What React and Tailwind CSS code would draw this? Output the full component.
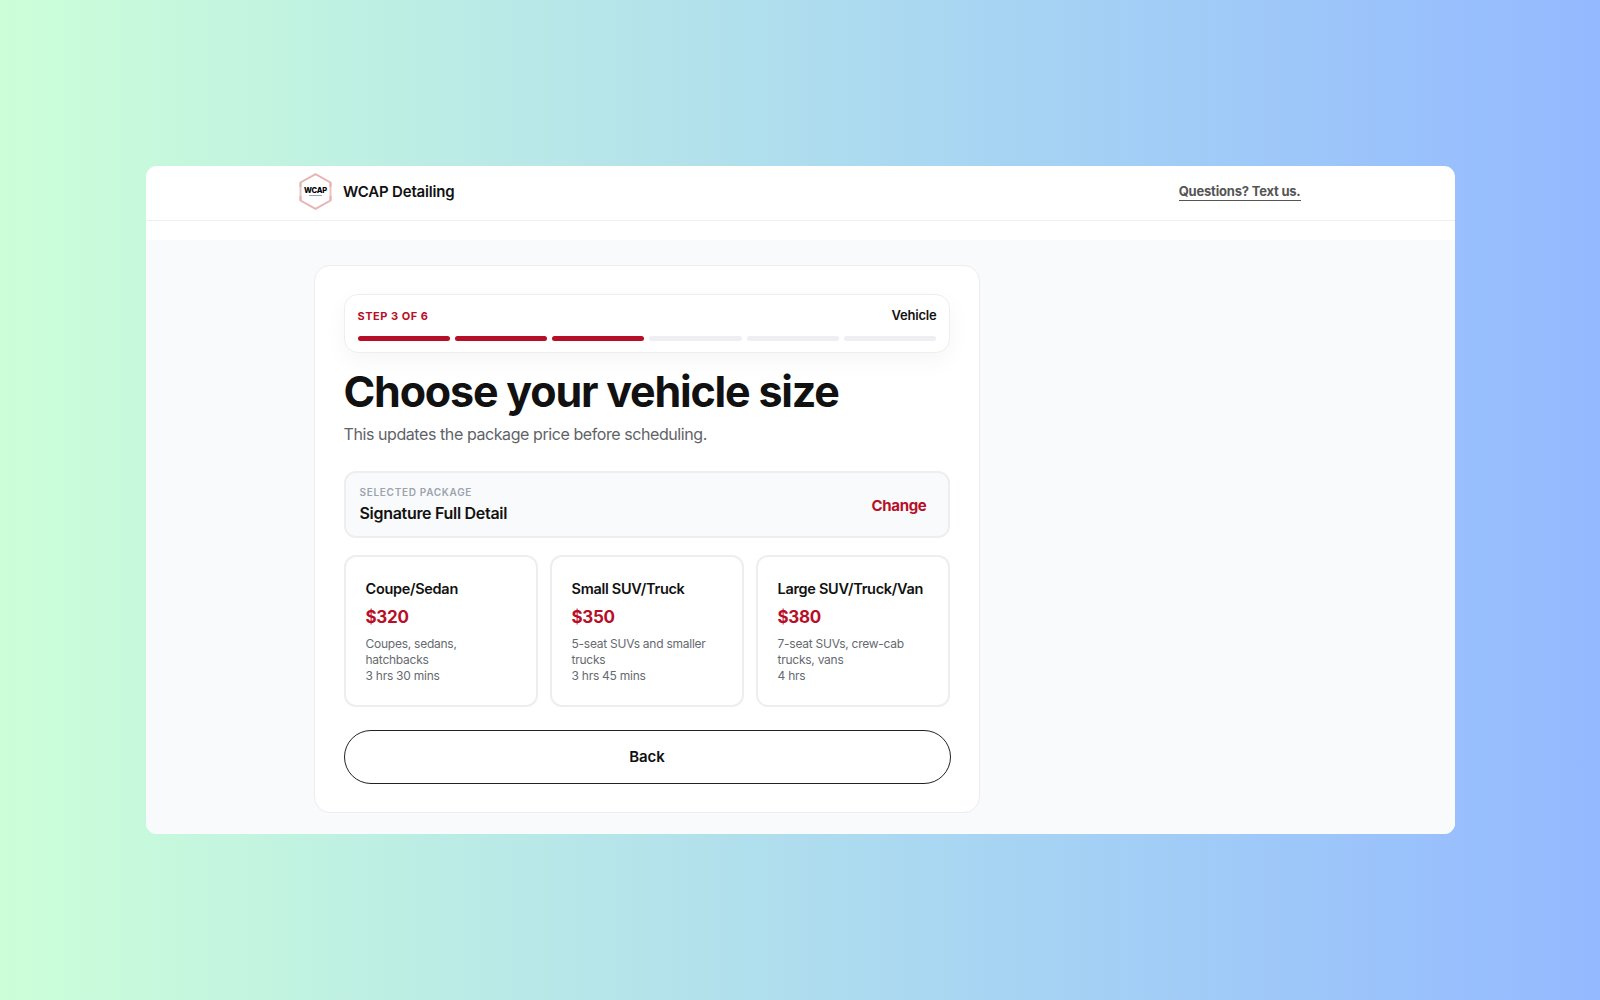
const FONT = "font-['Inter','Noto_Sans',sans-serif]";

function Logo() {
  return (
    <div className="relative w-[33px] h-[37px] shrink-0">
      <svg viewBox="0 0 33 37" className="w-full h-full" fill="none" stroke="#e9b3b3" strokeWidth="2">
        <path d="M1.5 14V9.5L16.5 1.2L31.5 9.5V14" />
        <path d="M1.5 23V27.5L16.5 35.8L31.5 27.5V23" />
        <path d="M1.5 9.5V27.5M31.5 9.5V27.5" strokeOpacity="0.8" />
      </svg>
      <div className="absolute inset-x-0 top-[13px] text-center text-[7.5px] leading-[9px] font-extrabold tracking-[-0.2px] text-black">WCAP</div>
      <div className="absolute left-[10px] top-[22px] w-[13px] h-px bg-gray-400" />
    </div>
  );
}

function SizeCard({ title, price, lines }) {
  return (
    <div className="flex-1 h-[152px] rounded-[12px] border-2 border-[#eeeef1] bg-white pl-[20px] pr-3 pt-[21.5px]">
      <div className="text-[14.5px] leading-[20px] font-semibold tracking-[-0.3px] text-[#111]">{title}</div>
      <div className="mt-[5px] text-[17px] leading-[27px] font-bold tracking-[-0.3px] text-[#b80f28]">{price}</div>
      <div className="mt-[5.5px] text-[12px] leading-[16px] tracking-[-0.25px] text-[#666a70]">
        {lines.map((l) => (
          <div key={l}>{l}</div>
        ))}
      </div>
    </div>
  );
}

export default function App() {
  return (
    <div className={`h-[1000px] flex items-center justify-center bg-gradient-to-r from-[#ccffd8] to-[#94b9ff] ${FONT}`}>
      <div className="w-[1309px] h-[668px] rounded-[11px] overflow-hidden bg-white flex flex-col">
        <header className="h-[55px] shrink-0 border-b border-[#efeff1] pl-[153.5px] pr-[154px] pb-[3px] flex items-center justify-between">
          <div className="flex items-center gap-[11px]">
            <Logo />
            <span className="pt-[2px] text-[15px] font-semibold tracking-[-0.2px] text-[#111]">WCAP Detailing</span>
          </div>
          <a className="text-[13px] leading-[18px] font-bold tracking-[-0.2px] text-[#555] border-b border-[#555]">Questions? Text us.</a>
        </header>
        <div className="h-[19px] shrink-0 bg-white" />
        <main className="flex-1 bg-[#f9fafb] pt-[25px] pl-[168px]">
          <section className="w-[666px] h-[548px] rounded-[16px] border border-[#ededf0] bg-white pl-[29px] pr-[29px] pt-[28px]">
            <div className="h-[59px] rounded-[14px] border border-[#eeeef0] bg-white pl-[13px] pr-[12px] pt-[12px] shadow-[0_8px_24px_rgba(0,0,0,0.04)]">
              <div className="flex items-center justify-between h-[18px]">
                <span className="text-[11px] font-bold tracking-[0.5px] text-[#b80f28]">STEP 3 OF 6</span>
                <span className="text-[13px] font-semibold tracking-[-0.2px] text-[#111]">Vehicle</span>
              </div>
              <div className="mt-[11px] flex gap-[5px]">
                <div className="flex-1 h-[5px] rounded-full bg-[#b80f28]" />
                <div className="flex-1 h-[5px] rounded-full bg-[#b80f28]" />
                <div className="flex-1 h-[5px] rounded-full bg-[#b80f28]" />
                <div className="flex-1 h-[5px] rounded-full bg-[#efeff3]" />
                <div className="flex-1 h-[5px] rounded-full bg-[#efeff3]" />
                <div className="flex-1 h-[5px] rounded-full bg-[#efeff3]" />
              </div>
            </div>
            <h1 className="mt-[14px] text-[43px] leading-[48px] font-bold tracking-[-1.2px] text-[#111]">Choose your vehicle size</h1>
            <p className="mt-[7px] text-[16px] leading-[24px] tracking-[-0.42px] text-[#5f6368]">This updates the package price before scheduling.</p>
            <div className="mt-[25px] h-[67px] rounded-[12px] border-2 border-[#eeeef1] bg-[#f9fafb] pl-[14px] pr-[21px] flex items-center justify-between">
              <div>
                <div className="text-[10px] leading-[14px] font-semibold tracking-[0.7px] text-[#9ca3af]">SELECTED PACKAGE</div>
                <div className="mt-[3.5px] text-[16px] leading-[22px] font-semibold tracking-[-0.3px] text-[#111]">Signature Full Detail</div>
              </div>
              <span className="mt-[4px] text-[15px] font-bold tracking-[-0.3px] text-[#b80f28]">Change</span>
            </div>
            <div className="mt-[17px] flex gap-3">
              <SizeCard title="Coupe/Sedan" price="$320" lines={["Coupes, sedans,", "hatchbacks", "3 hrs 30 mins"]} />
              <SizeCard title="Small SUV/Truck" price="$350" lines={["5-seat SUVs and smaller", "trucks", "3 hrs 45 mins"]} />
              <SizeCard title="Large SUV/Truck/Van" price="$380" lines={["7-seat SUVs, crew-cab", "trucks, vans", "4 hrs"]} />
            </div>
            <button className="mt-[23px] w-[607px] h-[54px] rounded-full border border-[#222] bg-white text-[15px] font-semibold tracking-[-0.1px] text-[#111]">Back</button>
          </section>
        </main>
      </div>
    </div>
  );
}
